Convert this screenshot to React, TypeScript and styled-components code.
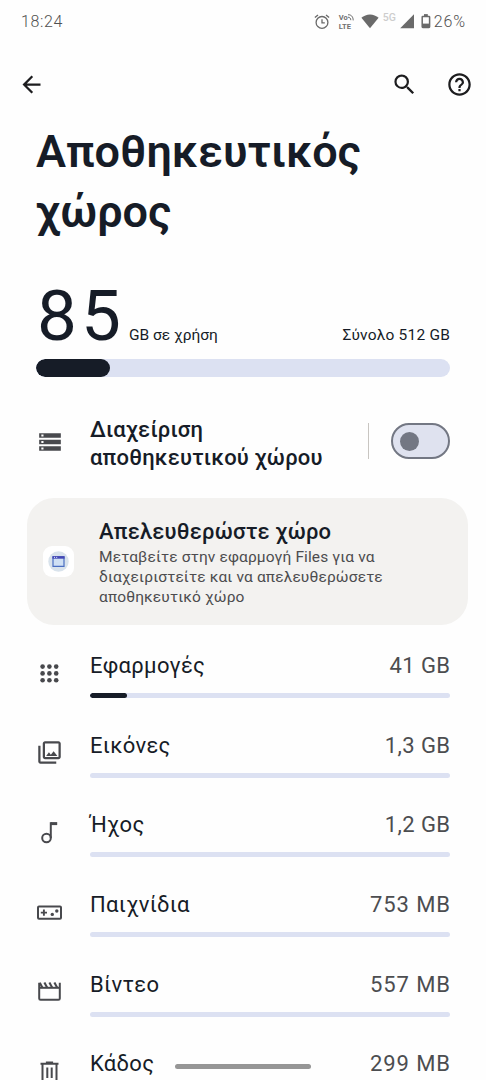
import type { ReactNode } from 'react';
import styled, { createGlobalStyle } from 'styled-components';
import {
  MdArrowBack,
  MdSearch,
  MdHelpOutline,
  MdStorage,
  MdOutlinePhotoLibrary,
} from 'react-icons/md';

const ink = '#161c27';
const track = '#dce1f2';
const muted = '#48494d';

const GlobalStyle = createGlobalStyle`
  * {
    box-sizing: border-box;
  }

  body {
    margin: 0;
    background: #fefefe;
    font-family: Roboto, 'Noto Sans', sans-serif;
    color: ${ink};
    overflow: hidden;
  }
`;

const Screen = styled.div`
  position: relative;
  width: 486px;
  height: 1080px;
  overflow: hidden;
  background: #fefefe;
`;

const StatusBar = styled.div`
  display: flex;
  align-items: center;
  height: 42px;
  padding: 1px 20px 0 21px;
  color: #6a6a6a;
`;

const StatusText = styled.span<{ $spacing: number }>`
  font-size: 16px;
  font-weight: 300;
  letter-spacing: ${({ $spacing }) => $spacing}px;
  line-height: 18px;
  color: #505050;
`;

const StatusIcons = styled.div`
  display: flex;
  align-items: center;
  margin-left: auto;

  svg {
    display: block;
  }
`;

const Gap = styled.span<{ $size: number }>`
  width: ${({ $size }) => $size}px;
`;

const Volte = styled.div`
  display: flex;
  flex-direction: column;
  width: 17px;
  font-size: 7.5px;
  font-weight: 700;
  line-height: 9px;
  letter-spacing: 0.1px;
  color: #707070;
`;

const VolteTop = styled.span`
  display: flex;
`;

const NetworkType = styled.span`
  width: 15px;
  margin-bottom: 8px;
  font-size: 10.5px;
  font-weight: 500;
  line-height: 10px;
  color: #cdcdcd;
`;

const AppBar = styled.header`
  display: flex;
  align-items: center;
  height: 80px;
  padding: 5px 13px 0 18px;
  color: #1d1d1f;
`;

const IconButton = styled.button<{ $push?: boolean }>`
  display: flex;
  padding: 0;
  border: 0;
  background: none;
  color: inherit;
  margin-left: ${({ $push }) => ($push ? 'auto' : '0')};

  & + & + & {
    margin-left: 28px;
  }
`;

const Title = styled.h1`
  margin: 0;
  padding-left: 36px;
  height: 119px;
  font-size: 45px;
  font-weight: 600;
  line-height: 59.5px;
  letter-spacing: 0;
`;

const Usage = styled.section`
  padding: 30px 36px 0;
`;

const UsageRow = styled.div`
  display: flex;
  align-items: baseline;
  height: 88px;
  padding-top: 2px;
`;

const UsedAmount = styled.span`
  width: 93px;
  padding-left: 1px;
  font-size: 71px;
  font-weight: 400;
  line-height: 85px;
  letter-spacing: 4px;
`;

const UsageNote = styled.span<{ $end?: boolean }>`
  margin-left: ${({ $end }) => ($end ? 'auto' : '0')};
  font-size: 15.5px;
  line-height: 20px;
  letter-spacing: ${({ $end }) => ($end ? 0.2 : 0)}px;
`;

const Track = styled.div<{ $height: number }>`
  height: ${({ $height }) => $height}px;
  border-radius: ${({ $height }) => $height / 2}px;
  background: ${track};
  overflow: hidden;
`;

const Fill = styled.div`
  height: 100%;
  border-radius: inherit;
  background: ${ink};
`;

const ManageRow = styled.section`
  display: flex;
  align-items: center;
  height: 121px;
  padding: 7px 36px 0;
`;

const RowIcon = styled.div`
  display: flex;
  justify-content: center;
  flex: none;
  width: 27px;
  padding-top: 1px;
  color: ${muted};
`;

const ManageLabel = styled.div`
  flex: 1;
  margin-left: 27px;
  padding-top: 5px;
  font-size: 22px;
  font-weight: 500;
  line-height: 28px;
  letter-spacing: 0.2px;
`;

const Divider = styled.div`
  width: 1px;
  height: 36px;
  margin-right: 22px;
  background: #c8c5c1;
`;

const Switch = styled.button`
  display: flex;
  align-items: center;
  width: 59px;
  height: 36px;
  padding: 0 0 0 7px;
  border: 2px solid #737783;
  border-radius: 18px;
  background: #dfe2ef;
`;

const Knob = styled.span`
  width: 19px;
  height: 19px;
  border-radius: 50%;
  background: #737783;
`;

const Card = styled.section`
  display: flex;
  align-items: center;
  width: 441px;
  height: 127px;
  margin-left: 27px;
  padding-left: 16px;
  border-radius: 27px;
  background: #f3f2f0;
`;

const FilesTile = styled.div`
  display: flex;
  align-items: center;
  justify-content: center;
  width: 31px;
  height: 31px;
  border-radius: 9px;
  background: #fff;
`;

const CardBody = styled.div`
  margin-left: 25px;
  padding-top: 3px;
`;

const CardTitle = styled.h2`
  margin: 0;
  padding-bottom: 2px;
  font-size: 22px;
  font-weight: 500;
  line-height: 28px;
  letter-spacing: 0.2px;
`;

const CardText = styled.p`
  margin: 0;
  font-size: 15.5px;
  line-height: 19.8px;
  letter-spacing: 0.13px;
  color: #4c4c4e;
`;

const List = styled.ul`
  margin: 0;
  padding: 8px 36px 0;
  list-style: none;
`;

const Item = styled.li`
  display: flex;
  align-items: center;
  height: 79.6px;
`;

const ItemBody = styled.div`
  flex: 1;
  margin-left: 27px;
`;

const ItemText = styled.div`
  display: flex;
  justify-content: space-between;
  height: 46px;
  font-size: 22px;
  line-height: 38px;
`;

const ItemName = styled.span`
  letter-spacing: 0.3px;
`;

const ItemSize = styled.span<{ $spacing: number }>`
  margin-right: -${({ $spacing }) => $spacing}px;
  letter-spacing: ${({ $spacing }) => $spacing}px;
  color: #4c4d50;
`;

const GestureBar = styled.div`
  position: absolute;
  left: 175px;
  top: 1064px;
  width: 136px;
  height: 5px;
  border-radius: 3px;
  background: #969696;
`;

const AlarmIcon = () => (
  <svg width="16" height="16" viewBox="0 0 16 16" fill="none" stroke="currentColor" strokeWidth="1.3">
    <circle cx="8" cy="8.4" r="5.9" />
    <path d="M8 5.2v3.6h2.8M.9 3.6 4 .9M15.1 3.6 12 .9" />
  </svg>
);

const WaveIcon = () => (
  <svg width="6" height="8" viewBox="0 0 6 8" fill="none" stroke="currentColor" strokeWidth="1">
    <path d="M0 1.8C3 1.4 5.2 3.6 5.2 7.4M0 4.2c1.8 0 2.8 1.2 2.8 3" />
  </svg>
);

const WifiIcon = () => (
  <svg width="18" height="15" viewBox="0 0 18 15" fill="currentColor">
    <path d="M9 14.2.4 3.8C2.8 1.9 5.7.4 9 .4s6.2 1.5 8.6 3.4z" />
  </svg>
);

const SignalIcon = () => (
  <svg width="15" height="15" viewBox="0 0 15 15" fill="currentColor">
    <path d="M14 .2v14H.2z" />
  </svg>
);

const BatteryIcon = () => (
  <svg width="10" height="15" viewBox="0 0 10 15" fill="none" stroke="currentColor" strokeWidth="1.5">
    <rect x="1.2" y="2.4" width="7.4" height="11" rx=".6" />
    <path d="M3 1.1h3.8" strokeWidth="2" />
    <path d="M1.2 9.6h7.4v3.8H1.2z" fill="currentColor" stroke="none" />
  </svg>
);

const FilesIcon = () => (
  <svg width="21" height="21" viewBox="0 0 21 21" fill="none">
    <circle cx="10.5" cy="10.5" r="10.2" fill="#d9e3ec" />
    <path d="M5 6.2h11v9.2H5z" fill="#cfe0f4" stroke="#4a6ec2" strokeWidth="1.2" />
    <path d="M4.4 5.1h12.2v2.6H4.4z" fill="#4348b5" />
    <path d="M6 6.4h1M8.2 6.4h1" stroke="#dbe4ff" strokeWidth="1" />
  </svg>
);

const AppsIcon = () => (
  <svg width="27" height="27" viewBox="0 0 27 27" fill="currentColor">
    {[6.6, 13.4, 20.2].map((y) =>
      [6.6, 13.4, 20.2].map((x) => <circle key={`${x}-${y}`} cx={x} cy={y} r="2.3" />)
    )}
  </svg>
);

const NoteIcon = () => (
  <svg width="27" height="27" viewBox="0 0 27 27" fill="none" stroke="currentColor" strokeWidth="2">
    <circle cx="10.5" cy="19" r="4.3" />
    <path d="M14.8 19V3.2" />
    <path d="M14.8 4.6h6.4" strokeWidth="3" />
  </svg>
);

const GamesIcon = () => (
  <svg width="27" height="27" viewBox="0 0 27 27" fill="none" stroke="currentColor" strokeWidth="2">
    <rect x="2" y="7.5" width="23" height="12.2" rx="1" />
    <path d="M4.8 13.6h6.2M7.9 10.5v6.2" strokeWidth="1.9" />
    <circle cx="16.3" cy="15.4" r="1.7" fill="currentColor" stroke="none" />
    <circle cx="20.8" cy="12" r="1.7" fill="currentColor" stroke="none" />
  </svg>
);

const MovieIcon = () => (
  <svg width="27" height="27" viewBox="0 0 27 27" fill="none" stroke="currentColor" strokeWidth="2">
    <path d="M3.2 4.8v15.6q0 1.4 1.4 1.4h17.8q1.4 0 1.4-1.4V4.8" />
    <path d="M3.2 9.8h20.6" />
    <path d="m3.8 4.8 2.6 5M8.4 4.6l2.7 5M13.4 4.6l2.7 5M18.4 4.6l2.7 5" strokeWidth="2.1" />
  </svg>
);

const TrashIcon = () => (
  <svg width="27" height="27" viewBox="0 0 27 27" fill="none" stroke="currentColor" strokeWidth="2">
    <path d="M4.5 5.8h18M9.9 4.4h7.2" />
    <path d="M6.5 5.8v16.6q0 1.2 1.2 1.2h11.6q1.2 0 1.2-1.2V5.8M11.3 9.4V20M15.7 9.4V20" />
  </svg>
);

interface Category {
  name: string;
  size: string;
  used: number;
  spacing: number;
  icon: ReactNode;
}

const categories: Category[] = [
  { name: 'Εφαρμογές', size: '41 GB', used: 10.3, spacing: 0.4, icon: <AppsIcon /> },
  { name: 'Εικόνες', size: '1,3 GB', used: 0, spacing: 0.4, icon: <MdOutlinePhotoLibrary size={27} /> },
  { name: 'Ήχος', size: '1,2 GB', used: 0, spacing: 0.4, icon: <NoteIcon /> },
  { name: 'Παιχνίδια', size: '753 MB', used: 0, spacing: 0.9, icon: <GamesIcon /> },
  { name: 'Βίντεο', size: '557 MB', used: 0, spacing: 0.9, icon: <MovieIcon /> },
  { name: 'Κάδος', size: '299 MB', used: 0, spacing: 0.9, icon: <TrashIcon /> },
];

export default function App() {
  return (
    <Screen>
      <GlobalStyle />
      <StatusBar>
        <StatusText $spacing={0.6}>18:24</StatusText>
        <StatusIcons>
          <AlarmIcon />
          <Gap $size={9} />
          <Volte>
            <VolteTop>
              Vo
              <WaveIcon />
            </VolteTop>
            LTE
          </Volte>
          <Gap $size={5} />
          <WifiIcon />
          <Gap $size={4} />
          <NetworkType>5G</NetworkType>
          <Gap $size={2} />
          <SignalIcon />
          <Gap $size={6} />
          <BatteryIcon />
          <Gap $size={3} />
          <StatusText $spacing={0.9}>26%</StatusText>
        </StatusIcons>
      </StatusBar>

      <AppBar>
        <IconButton aria-label="Πίσω">
          <MdArrowBack size={27} />
        </IconButton>
        <IconButton $push aria-label="Αναζήτηση">
          <MdSearch size={27} />
        </IconButton>
        <IconButton aria-label="Βοήθεια">
          <MdHelpOutline size={27} />
        </IconButton>
      </AppBar>

      <Title>
        Αποθηκευτικός
        <br />
        χώρος
      </Title>

      <Usage>
        <UsageRow>
          <UsedAmount>85</UsedAmount>
          <UsageNote>GB σε χρήση</UsageNote>
          <UsageNote $end>Σύνολο 512 GB</UsageNote>
        </UsageRow>
        <Track $height={18}>
          <Fill style={{ width: '17.9%' }} />
        </Track>
      </Usage>

      <ManageRow>
        <RowIcon>
          <MdStorage size={26} />
        </RowIcon>
        <ManageLabel>
          Διαχείριση
          <br />
          αποθηκευτικού χώρου
        </ManageLabel>
        <Divider />
        <Switch role="switch" aria-checked={false}>
          <Knob />
        </Switch>
      </ManageRow>

      <Card>
        <FilesTile>
          <FilesIcon />
        </FilesTile>
        <CardBody>
          <CardTitle>Απελευθερώστε χώρο</CardTitle>
          <CardText>
            Μεταβείτε στην εφαρμογή Files για να
            <br />
            διαχειριστείτε και να απελευθερώσετε
            <br />
            αποθηκευτικό χώρο
          </CardText>
        </CardBody>
      </Card>

      <List>
        {categories.map((category) => (
          <Item key={category.name}>
            <RowIcon>{category.icon}</RowIcon>
            <ItemBody>
              <ItemText>
                <ItemName>{category.name}</ItemName>
                <ItemSize $spacing={category.spacing}>{category.size}</ItemSize>
              </ItemText>
              <Track $height={5}>
                <Fill style={{ width: `${category.used}%` }} />
              </Track>
            </ItemBody>
          </Item>
        ))}
      </List>
      <GestureBar />
    </Screen>
  );
}
